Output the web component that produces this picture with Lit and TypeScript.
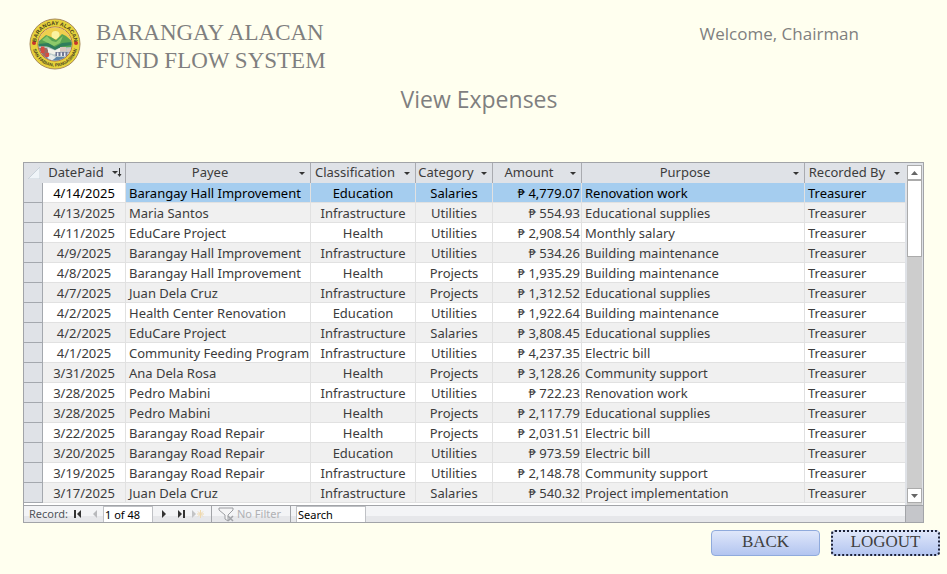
import { LitElement, html, css } from "lit";
import { customElement, property } from "lit/decorators.js";
import { classMap } from "lit/directives/class-map.js";

type Expense = [string, string, string, string, string, string];

const EXPENSES: Expense[] = [
  ["4/14/2025", "Barangay Hall Improvement", "Education", "Salaries", "4,779.07", "Renovation work"],
  ["4/13/2025", "Maria Santos", "Infrastructure", "Utilities", "554.93", "Educational supplies"],
  ["4/11/2025", "EduCare Project", "Health", "Utilities", "2,908.54", "Monthly salary"],
  ["4/9/2025", "Barangay Hall Improvement", "Infrastructure", "Utilities", "534.26", "Building maintenance"],
  ["4/8/2025", "Barangay Hall Improvement", "Health", "Projects", "1,935.29", "Building maintenance"],
  ["4/7/2025", "Juan Dela Cruz", "Infrastructure", "Projects", "1,312.52", "Educational supplies"],
  ["4/2/2025", "Health Center Renovation", "Education", "Utilities", "1,922.64", "Building maintenance"],
  ["4/2/2025", "EduCare Project", "Infrastructure", "Salaries", "3,808.45", "Educational supplies"],
  ["4/1/2025", "Community Feeding Program", "Infrastructure", "Utilities", "4,237.35", "Electric bill"],
  ["3/31/2025", "Ana Dela Rosa", "Health", "Projects", "3,128.26", "Community support"],
  ["3/28/2025", "Pedro Mabini", "Infrastructure", "Utilities", "722.23", "Renovation work"],
  ["3/28/2025", "Pedro Mabini", "Health", "Projects", "2,117.79", "Educational supplies"],
  ["3/22/2025", "Barangay Road Repair", "Health", "Projects", "2,031.51", "Electric bill"],
  ["3/20/2025", "Barangay Road Repair", "Education", "Utilities", "973.59", "Electric bill"],
  ["3/19/2025", "Barangay Road Repair", "Infrastructure", "Utilities", "2,148.78", "Community support"],
  ["3/17/2025", "Juan Dela Cruz", "Infrastructure", "Salaries", "540.32", "Project implementation"],
];

const COLUMNS = ["DatePaid", "Payee", "Classification", "Category", "Amount", "Purpose", "Recorded By"];

@customElement("barangay-seal")
export class BarangaySeal extends LitElement {
  static styles = css`
    :host { display: block; width: 52px; height: 52px; }
    svg { display: block; width: 100%; height: 100%; }
    .ring { font: bold 11px "Liberation Sans", sans-serif; fill: #4a4520; }
    .small { font-size: 9px; }
  `;
  render() {
    return html`<svg viewBox="0 0 104 104" role="img" aria-label="Seal of Barangay Alacan">
      <defs>
        <path id="top" d="M14 52 A38 38 0 0 1 90 52" />
        <path id="bottom" d="M7 52 A45 45 0 0 0 97 52" />
        <clipPath id="disc"><circle cx="52" cy="52" r="33" /></clipPath>
      </defs>
      <circle cx="52" cy="52" r="50" fill="#e6d23c" stroke="#a88a5c" stroke-width="2" />
      <circle cx="52" cy="52" r="34" fill="#dfe6d8" stroke="#b5683c" stroke-width="2" />
      <g clip-path="url(#disc)">
        <rect x="18" y="18" width="68" height="68" fill="#b9c9c8" />
        <rect x="18" y="18" width="68" height="26" fill="#efcf4e" />
        <circle cx="53" cy="34" r="8" fill="#fbf3a0" />
        <path d="M16 50 L34 34 L44 38 L54 44 L66 32 L74 36 L90 50 L90 58 L52 60 L16 54Z" fill="#58a352" />
        <path d="M26 44 L36 36 L46 46 L54 48 L68 36 L62 50 L50 56Z" fill="#8cc96a" />
        <path d="M18 52 L38 50 L52 58 L66 50 L86 48 L86 54 L66 57 L52 64 L36 56 L18 57Z" fill="#2f7d5c" />
        <path d="M19 60 h16 l5 8 v18 h-21z" fill="#9d6b62" />
        <path d="M24 57 h7 v13 h-7z M33 70 h7 v9 h-7z" fill="#d44d40" />
        <path d="M38 60 l14 5 l10 -5 v8 l-12 5 l-12 -4z" fill="#f2f2e8" />
        <path d="M53 68 h30 v8 h-30z" fill="#6f7792" />
        <path d="M62 58 h12 v9 h-12z M76 61 h9 v6 h-9z" fill="#d9c6bd" />
        <path d="M56 69 h3 v7 h-3z M63 69 h3 v7 h-3z M70 69 h3 v7 h-3z M77 69 h3 v7 h-3z" fill="#eceef2" />
        <path d="M34 78 h40 v10 h-40z" fill="#5f86a8" />
        <path d="M44 73 l10 6 l-8 6 l-10 -5z" fill="#e8ece8" />
      </g>
      <circle cx="10" cy="50" r="4" fill="#c9332b" />
      <circle cx="94" cy="50" r="4" fill="#c9332b" />
      <text class="ring"><textPath href="#top" startOffset="50%" text-anchor="middle">BARANGAY ALACAN</textPath></text>
      <text class="ring small"><textPath href="#bottom" startOffset="50%" text-anchor="middle">SAN FABIAN, PANGASINAN</textPath></text>
    </svg>`;
  }
}

@customElement("expense-sheet")
export class ExpenseSheet extends LitElement {
  @property({ attribute: false }) rows: Expense[] = [];

  static styles = css`
    :host {
      display: block;
      border: 1px solid #a2a4a8;
      font: 13px/17px "Noto Sans", "Open Sans", sans-serif;
      color: #3c3c3c;
    }
    button { border: 0; padding: 0; margin: 0; background: none; color: inherit; font: inherit; display: flex; align-items: center; justify-content: center; }
    svg { display: block; }
    .grid { display: flex; background: #fff; }
    .sheet { flex: 1; min-width: 0; padding-bottom: 2px; }
    table { width: 100%; table-layout: fixed; border-collapse: separate; border-spacing: 0; }
    .c-select { width: 19px; }
    .c-date { width: 83px; }
    .c-payee { width: 185px; }
    .c-class { width: 105px; }
    .c-category { width: 77px; }
    .c-amount { width: 89px; }
    .c-by { width: 100px; }
    th, td { box-sizing: border-box; height: 20px; padding: 0; font-weight: normal; white-space: nowrap; overflow: hidden; }
    thead th { background: #dfe2e7; border-right: 1px solid #a9abb0; }
    thead th.corner, thead th:last-child { border-right: 0; }
    .head { display: flex; align-items: flex-start; height: 20px; line-height: 18px; }
    .head span { flex: 1; text-align: center; }
    .head button { width: 16px; height: 20px; }
    .corner svg { margin: 0 0 0 4px; }
    td { padding-top: 2px; border-right: 1px solid #e1e1e1; border-bottom: 1px solid #e1e1e1; text-align: center; }
    td:last-child { border-right: 0; }
    tbody th { background: #dfe2e7; border-right: 1px solid #a4a8ae; border-bottom: 1px solid #a4a8ae; }
    tr.alt td { background: #f0f0f0; }
    td.left { text-align: left; padding-left: 3px; }
    td.right { text-align: right; padding-right: 1px; }
    tr.current td { color: #000; background: #a5cdef; }
    tr.current td.date { background: #fff; }
    .scroll { width: 18px; display: flex; flex-direction: column; background: linear-gradient(#dfe2e7 20px, #cdcdcd 20px); border: solid #dfe2e7; border-width: 0 1px 0 2px; box-sizing: border-box; }
    .scroll button { box-sizing: border-box; height: 15px; background: #fff; border: 1px solid #ababab; }
    .scroll .up { margin-top: 2px; }
    .scroll .down { margin-bottom: 2px; }
    .track { flex: 1; }
    .thumb { box-sizing: border-box; height: 25%; background: #fff; border: 1px solid #ababab; }
    .nav { display: flex; border-top: 1px solid #a2a4a8; font-size: 11px; line-height: 16px; }
    .bar { flex: 1; display: flex; align-items: stretch; height: 16px; background: linear-gradient(#f3f4f6 60%, #e6e7ea 60%); }
    .end { box-sizing: border-box; width: 18px; background: #c5c6ca; border-left: 1px solid #a2a4a8; }
    .label { padding-left: 5px; width: 40px; color: #51545a; }
    .bar button { width: 17px; }
    .bar input { box-sizing: border-box; margin: 0; border: 1px solid #bfc1c5; border-bottom: 0; padding: 0 1px; background: #fff; color: #000; font: inherit; outline: 0; }
    .bar .position { width: 50px; margin-right: 2px; }
    .bar .find { width: 70px; }
    .bar .filter { width: 80px; gap: 2px; color: #b0b1b4; justify-content: flex-start; padding-left: 6px; box-sizing: border-box; border-left: 1px solid #a2a4a8; border-right: 1px solid #a2a4a8; margin: 0 5px 0 5px; }
  `;

  private arrow(sorted: boolean) {
    return sorted
      ? html`<svg width="10" height="10" viewBox="0 0 10 10"><path d="M0 3h6L3 6z" fill="#333" /><path d="M7.500 0v8" stroke="#333" fill="none" /><path d="M5.500 6h4L7.500 9z" fill="#333" /></svg>`
      : html`<svg width="8" height="5" viewBox="0 0 8 5"><path d="M1 1h6L4 4z" fill="#333" /></svg>`;
  }

  private glyph(name: string, d: string, color = "#333") {
    return html`<button aria-label=${name}><svg width="10" height="8" viewBox="0 0 10 8"><path d=${d} fill=${color} /></svg></button>`;
  }

  render() {
    return html`
      <div class="grid">
        <div class="sheet">
          <table>
            <colgroup>
              <col class="c-select" /><col class="c-date" /><col class="c-payee" /><col class="c-class" />
              <col class="c-category" /><col class="c-amount" /><col /><col class="c-by" />
            </colgroup>
            <thead>
              <tr>
                <th class="corner" aria-label="Select all"><svg width="12" height="12" viewBox="0 0 12 12"><path d="M12 0v12H0z" fill="#eff4f8" stroke="#c9d2da" /></svg></th>
                ${COLUMNS.map((name, i) => html`<th scope="col"><div class="head"><span>${name}</span><button aria-label="Filter ${name}">${this.arrow(i === 0)}</button></div></th>`)}
              </tr>
            </thead>
            <tbody>
              ${this.rows.map(([date, payee, cls, category, amount, purpose], i) => html`
                <tr class=${classMap({ current: i === 0, alt: i % 2 === 1 })}>
                  <th scope="row" aria-label="Record ${i + 1}"></th>
                  <td class="date">${date}</td>
                  <td class="left">${payee}</td>
                  <td>${cls}</td>
                  <td>${category}</td>
                  <td class="right">₱ ${amount}</td>
                  <td class="left">${purpose}</td>
                  <td class="left">Treasurer</td>
                </tr>`)}
            </tbody>
          </table>
        </div>
        <div class="scroll">
          <button class="up" aria-label="Scroll up"><svg width="7" height="4" viewBox="0 0 7 4"><path d="M0 4h7L3.5 0z" fill="#666" /></svg></button>
          <div class="track"><div class="thumb"></div></div>
          <button class="down" aria-label="Scroll down"><svg width="7" height="4" viewBox="0 0 7 4"><path d="M0 0h7L3.5 4z" fill="#666" /></svg></button>
        </div>
      </div>
      <div class="nav">
        <div class="bar">
          <label class="label" for="position">Record:</label>
          ${this.glyph("First record", "M1 0h2v8h-2z M8 0v8L4 4z")}
          ${this.glyph("Previous record", "M7 0v8L3 4z", "#b8b9bc")}
          <input id="position" class="position" .value=${"1 of 48"} />
          ${this.glyph("Next record", "M3 0v8l4 -4z")}
          ${this.glyph("Last record", "M2 0v8l4 -4z M7 0h2v8h-2z")}
          <button aria-label="New record"><svg width="12" height="8" viewBox="0 0 12 8"><path d="M0 0v8l4 -4z" fill="#c3c4c6" /><path d="M8.500 0v8M5 4h7M6 1.500l5 5M11 1.500l-5 5" stroke="#efd9ae" /></svg></button>
          <button class="filter"><svg width="17" height="15" viewBox="0 0 17 15"><path d="M1 1h14v2l-5 5v6l-3 -2v-4l-6 -5z" fill="#f5f5f6" stroke="#9c9ea2" /><path d="M10 9l5 5M15 9l-5 5" stroke="#a3a5a9" stroke-width="1.500" /></svg>No Filter</button>
          <input class="find" aria-label="Search records" .value=${"Search"} />
        </div>
        <div class="end"></div>
      </div>
    `;
  }
}

@customElement("app-root")
export class AppRoot extends LitElement {
  static styles = css`
    :host { display: block; min-height: 100vh; box-sizing: border-box; background: #ffffef; color: #7f7f7f; font-family: "Open Sans", "Noto Sans", sans-serif; }
    header { display: flex; align-items: flex-start; padding: 18px 88px 0 29px; }
    .name { margin: 1px auto 0 15px; font: 23px/28px "Liberation Serif", serif; }
    .welcome { font-size: 17px; line-height: 32px; }
    h2 { margin: 6px 0 0; padding-left: 11px; font-size: 23px; line-height: 36px; font-weight: normal; text-align: center; }
    expense-sheet { margin: 45px 23px 0 23px; }
    footer { display: flex; justify-content: flex-end; gap: 11px; padding: 7px 7px 18px; }
    footer button { box-sizing: border-box; width: 109px; height: 26px; padding: 0 0 2px; border: 1px solid #8faadc; border-radius: 4px; background: linear-gradient(#dfe7fa, #b3c5f0); color: #404040; font: 17px/22px "Liberation Serif", serif; }
    footer .focused { border-color: #c3d0f0; outline: 2px dotted #1c2238; outline-offset: -2px; }
  `;

  render() {
    return html`
      <header>
        <barangay-seal></barangay-seal>
        <h1 class="name">BARANGAY ALACAN<br />FUND FLOW SYSTEM</h1>
        <div class="welcome">Welcome, Chairman</div>
      </header>
      <main>
        <h2>View Expenses</h2>
        <expense-sheet .rows=${EXPENSES}></expense-sheet>
      </main>
      <footer>
        <button>BACK</button>
        <button class="focused">LOGOUT</button>
      </footer>
    `;
  }
}
